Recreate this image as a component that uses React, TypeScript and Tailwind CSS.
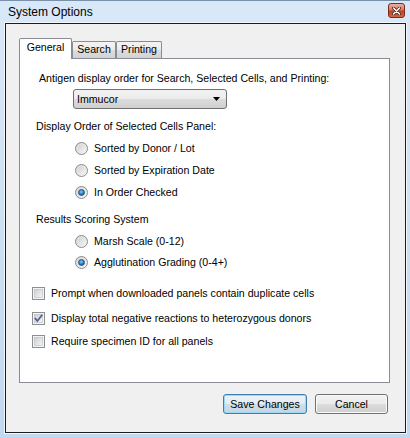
import React from "react";

const FONT = { fontFamily: '"Liberation Sans", Arial, sans-serif' };

function Radio({ checked }: { checked?: boolean }) {
  return (
    <svg width="13" height="13" viewBox="0 0 13 13" className="shrink-0">
      <defs>
        <linearGradient id="rOuter" x1="0" y1="0" x2="1" y2="1">
          <stop offset="0" stopColor="#d4d4d4" />
          <stop offset="1" stopColor="#fbfbfb" />
        </linearGradient>
        <linearGradient id="rInner" x1="0" y1="0" x2="1" y2="1">
          <stop offset="0" stopColor="#cfcfcf" />
          <stop offset="1" stopColor="#f7f7f7" />
        </linearGradient>
        <radialGradient id="rDot" cx="0.45" cy="0.4" r="0.7">
          <stop offset="0" stopColor="#8fd0f7" />
          <stop offset="0.5" stopColor="#2d7fc0" />
          <stop offset="1" stopColor="#0c3f78" />
        </radialGradient>
      </defs>
      <circle cx="6.5" cy="6.5" r="6" fill="url(#rOuter)" stroke="#8a8a8a" strokeWidth="1" />
      <circle cx="6.5" cy="6.5" r="4.2" fill="url(#rInner)" stroke="#e6e6e6" strokeWidth="0.6" />
      {checked && <circle cx="6.5" cy="6.5" r="3" fill="url(#rDot)" stroke="#1b4d80" strokeWidth="0.7" />}
    </svg>
  );
}

function Check({ checked }: { checked?: boolean }) {
  return (
    <svg width="13" height="13" viewBox="0 0 13 13" className="shrink-0">
      <defs>
        <linearGradient id="cInner" x1="0" y1="0" x2="1" y2="1">
          <stop offset="0" stopColor="#cbcfd4" />
          <stop offset="1" stopColor="#f7f7f7" />
        </linearGradient>
      </defs>
      <rect x="0.5" y="0.5" width="12" height="12" fill="#f4f4f4" stroke="#8e8f8f" />
      <rect x="2.5" y="2.5" width="8" height="8" fill="url(#cInner)" stroke="#b9bcc0" strokeWidth="0.6" />
      {checked && (
        <path d="M3.3 6.6 L5.4 9 L9.7 3.4" fill="none" stroke="#4a5d98" strokeWidth="1.7" strokeLinecap="square" />
      )}
    </svg>
  );
}

function RadioRow({ label, checked, h }: { label: string; checked?: boolean; h: string }) {
  return (
    <div className={`flex items-center gap-[6px] pl-[55px] ${h}`}>
      <Radio checked={checked} />
      <span className="leading-[13px]">{label}</span>
    </div>
  );
}

function CheckRow({ label, checked, mt }: { label: string; checked?: boolean; mt: string }) {
  return (
    <div className={`flex items-center gap-[6px] pl-[12px] h-[22px] ${mt}`}>
      <Check checked={checked} />
      <span className="leading-[13px]">{label}</span>
    </div>
  );
}

export default function App() {
  return (
    <div
      className="w-[410px] h-[438px] flex flex-col pl-[4px] pr-[3px] pb-[4px] bg-[linear-gradient(to_bottom,#d9e8f8_0%,#cfe2f5_40%,#c1d8f1_100%)] text-black text-[10.6px]"
      style={FONT}
    >
      {/* title bar */}
      <div className="h-[22px] -ml-[4px] -mr-[3px] border-t border-[#7890a8] flex items-center justify-between pl-[8px] pr-[5px]">
        <span className="text-[12px] leading-[14px] pt-[1px]">System Options</span>
        <div className="w-[17px] h-[15px] -mt-[2px] rounded-[3px] border border-[#7a2a1c] bg-[linear-gradient(to_bottom,#eab2a3_0%,#d9775f_45%,#c2411f_55%,#d5643f_100%)] flex items-center justify-center">
          <svg width="9" height="8" viewBox="0 0 9 8">
            <path d="M1.5 1 L7.5 7 M7.5 1 L1.5 7" stroke="#3a1a14" strokeWidth="3" strokeLinecap="round" />
            <path d="M1.5 1 L7.5 7 M7.5 1 L1.5 7" stroke="#ffffff" strokeWidth="1.6" strokeLinecap="round" />
          </svg>
        </div>
      </div>

      {/* client area */}
      <div className="flex-1 border border-[#f3f7fc]">
        <div className="h-full border border-[#1c1c1c] bg-[#f0f0f0] pl-[13px] pr-[15px] pt-[14px] pb-[18px] flex flex-col">
          {/* tabs */}
          <div className="flex items-end h-[20px]">
            <div className="relative z-10 w-[53px] h-[21px] -mb-[1px] bg-white border border-b-0 border-[#898c95] rounded-t-[2px] flex items-center justify-center pb-[2px]">
              General
            </div>
            <div className="w-[44px] h-[17px] border border-b-0 border-[#898c95] rounded-t-[2px] bg-[linear-gradient(to_bottom,#f3f3f3_0%,#ebebeb_50%,#dddddd_50%,#d3d3d3_100%)] flex items-center justify-center">
              Search
            </div>
            <div className="w-[46px] h-[17px] border border-b-0 border-[#898c95] rounded-t-[2px] bg-[linear-gradient(to_bottom,#f3f3f3_0%,#ebebeb_50%,#dddddd_50%,#d3d3d3_100%)] flex items-center justify-center">
              Printing
            </div>
          </div>

          {/* panel */}
          <div className="h-[325px] bg-white border border-[#898c95] flex flex-col">
            <div className="mt-[13px] pl-[19px] h-[13px] leading-[13px]">
              Antigen display order for Search, Selected Cells, and Printing:
            </div>
            <div className="mt-[4px] ml-[53px] w-[154px] h-[20px] rounded-[3px] border border-[#707070] bg-[linear-gradient(to_bottom,#f2f2f2_0%,#ebebeb_50%,#dddddd_50%,#cfcfcf_100%)] flex items-center justify-between pl-[3px] pr-[6px]">
              <span className="leading-[13px]">Immucor</span>
              <svg width="7" height="4" viewBox="0 0 7 4">
                <path d="M0 0 H7 L3.5 4 Z" fill="#000" />
              </svg>
            </div>

            <div className="mt-[11px] pl-[16px] h-[13px] leading-[13px]">Display Order of Selected Cells Panel:</div>
            <div className="mt-[4px] flex flex-col">
              <RadioRow label="Sorted by Donor / Lot" h="h-[22px]" />
              <RadioRow label="Sorted by Expiration Date" h="h-[22px]" />
              <RadioRow label="In Order Checked" checked h="h-[22px]" />
            </div>

            <div className="mt-[10px] pl-[16px] h-[13px] leading-[13px]">Results Scoring System</div>
            <div className="mt-[5px] flex flex-col">
              <RadioRow label="Marsh Scale (0-12)" h="h-[21px]" />
              <RadioRow label="Agglutination Grading (0-4+)" checked h="h-[21px]" />
            </div>

            <CheckRow mt="mt-[9px]" label="Prompt when downloaded panels contain duplicate cells" />
            <CheckRow mt="mt-[3px]" label="Display total negative reactions to heterozygous donors" checked />
            <CheckRow mt="mt-[1px]" label="Require specimen ID for all panels" />
          </div>

          {/* buttons */}
          <div className="mt-[11px] flex justify-end gap-[8px] pr-[2px]">
            <div className="w-[84px] h-[20px] rounded-[3px] border border-[#3c7fb1] bg-[linear-gradient(to_bottom,#eef4f8_0%,#e3ecf2_50%,#d2dfe8_50%,#c6d5e0_100%)] shadow-[inset_0_0_0_1px_#9fd6f5] flex items-center justify-center">
              <span className="text-[10.6px] leading-[13px]">Save Changes</span>
            </div>
            <div className="w-[73px] h-[20px] rounded-[3px] border border-[#707070] bg-[linear-gradient(to_bottom,#f2f2f2_0%,#ebebeb_50%,#dddddd_50%,#cfcfcf_100%)] shadow-[inset_0_0_0_1px_#fbfbfb] flex items-center justify-center">
              <span className="text-[10.6px] leading-[13px]">Cancel</span>
            </div>
          </div>
        </div>
      </div>
    </div>
  );
}
